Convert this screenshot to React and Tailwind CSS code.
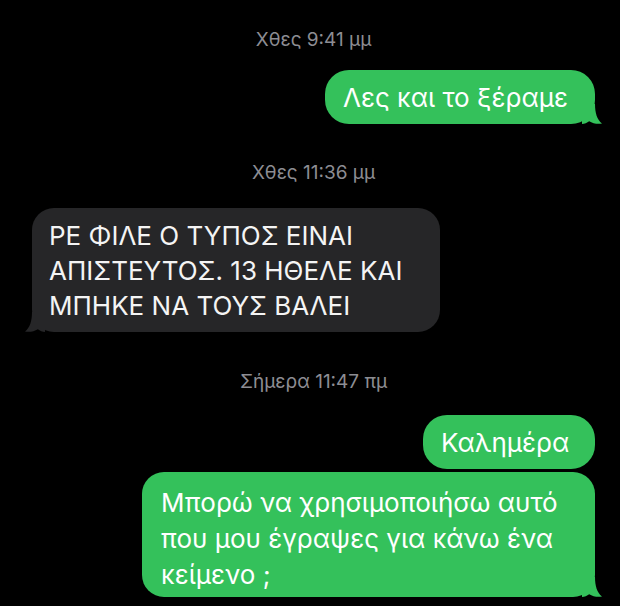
import React from 'react';

const GREEN = 'bg-[#34c15b]';

const Tail = ({ side, color }) => (
  <svg
    width="20"
    height="20"
    viewBox="0 0 20 20"
    className={
      side === 'right'
        ? 'absolute bottom-0 right-[-7px]'
        : 'absolute bottom-0 left-[-7px] -scale-x-100'
    }
  >
    <path
      d="M0 0 H13 C13 9 15 15.5 20 19.6 C15 20.4 10.5 19.2 7.2 17.2 C5 18.8 2.5 20 0 20 Z"
      fill={color}
    />
  </svg>
);

const Stamp = ({ children, className }) => (
  <div className={`text-center text-[19px] leading-[20px] text-[#8d8d93] ${className}`}>
    {children}
  </div>
);

export default function App() {
  return (
    <div className="w-[620px] h-[606px] overflow-hidden bg-black font-['Inter',sans-serif] pl-[32px] pr-[25px] flex flex-col">
      <Stamp className="mt-[30px]">Χθες 9:41 μμ</Stamp>

      <div className={`relative self-end mt-[20px] w-[270px] rounded-[24px] ${GREEN} pl-[18px] pt-[12px] pb-[10px] text-[26px] leading-[32px] text-white`}>
        Λες και το ξέραμε
        <Tail side="right" color="#34c15b" />
      </div>

      <Stamp className="mt-[39px]">Χθες 11:36 μμ</Stamp>

      <div className="relative self-start mt-[25px] w-[408px] rounded-[22px] bg-[#262628] pl-[17px] pt-[10px] pb-[9px] text-[26px] leading-[35px] text-[#f4f4f4]">
        ΡΕ ΦΙΛΕ Ο ΤΥΠΟΣ ΕΙΝΑΙ
        <br />
        ΑΠΙΣΤΕΥΤΟΣ. 13 ΗΘΕΛΕ ΚΑΙ
        <br />
        ΜΠΗΚΕ ΝΑ ΤΟΥΣ ΒΑΛΕΙ
        <Tail side="left" color="#262628" />
      </div>

      <Stamp className="mt-[40px]">Σήμερα 11:47 πμ</Stamp>

      <div className={`self-end mt-[23px] w-[172px] rounded-[24px] ${GREEN} pl-[18px] pt-[12px] pb-[10px] text-[26px] leading-[32px] text-white`}>
        Καλημέρα
      </div>

      <div className={`relative self-end mt-[3px] w-[453px] rounded-[22px] ${GREEN} pl-[19px] pt-[13px] pb-[4px] text-[26px] leading-[36px] text-white`}>
        Μπορώ να χρησιμοποιήσω αυτό
        <br />
        που μου έγραψες για κάνω ένα
        <br />
        κείμενο ;
        <Tail side="right" color="#34c15b" />
      </div>
    </div>
  );
}
